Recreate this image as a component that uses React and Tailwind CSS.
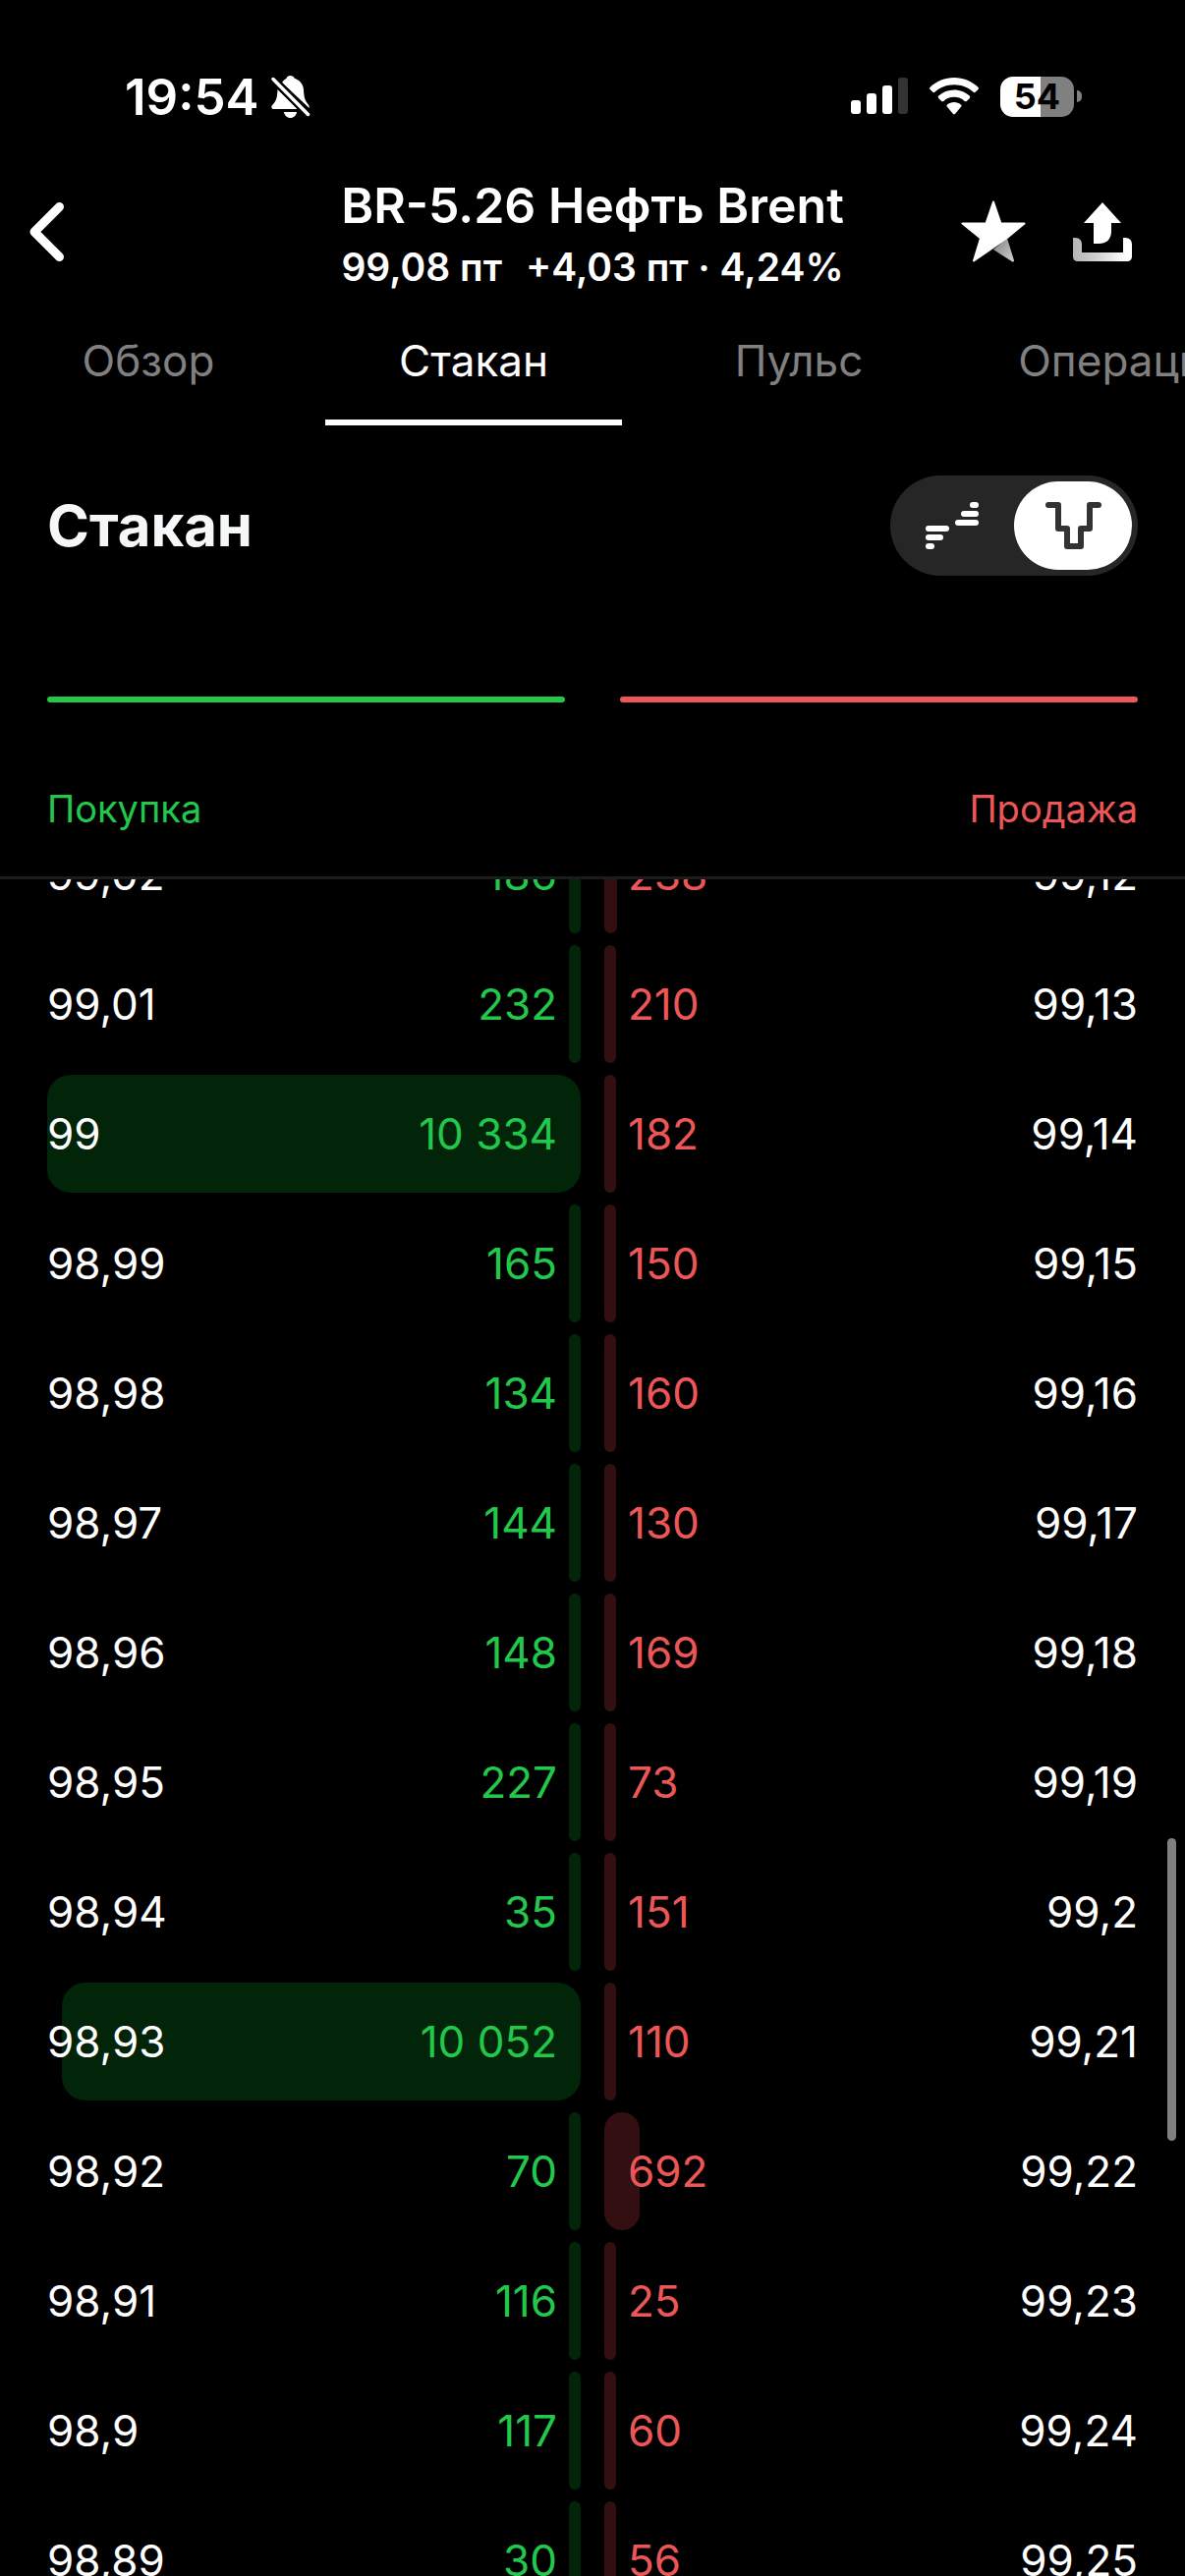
import { useLayoutEffect, useRef, useState } from "react";

const TABS = ["Обзор", "Стакан", "Пульс", "Операции"];

const MAX_VOLUME = 10334;

const ROWS = [
  { bid: "99,02", bidQty: 186, ask: "99,12", askQty: 238 },
  { bid: "99,01", bidQty: 232, ask: "99,13", askQty: 210 },
  { bid: "99", bidQty: 10334, ask: "99,14", askQty: 182 },
  { bid: "98,99", bidQty: 165, ask: "99,15", askQty: 150 },
  { bid: "98,98", bidQty: 134, ask: "99,16", askQty: 160 },
  { bid: "98,97", bidQty: 144, ask: "99,17", askQty: 130 },
  { bid: "98,96", bidQty: 148, ask: "99,18", askQty: 169 },
  { bid: "98,95", bidQty: 227, ask: "99,19", askQty: 73 },
  { bid: "98,94", bidQty: 35, ask: "99,2", askQty: 151 },
  { bid: "98,93", bidQty: 10052, ask: "99,21", askQty: 110 },
  { bid: "98,92", bidQty: 70, ask: "99,22", askQty: 692 },
  { bid: "98,91", bidQty: 116, ask: "99,23", askQty: 25 },
  { bid: "98,9", bidQty: 117, ask: "99,24", askQty: 60 },
  { bid: "98,89", bidQty: 30, ask: "99,25", askQty: 56 },
];

const formatQty = (qty) =>
  String(qty).replace(/\B(?=(\d{3})+$)/g, "\u00a0");

const barWidth = (qty) => `${(qty / MAX_VOLUME) * 100}%`;

const BellOffIcon = () => (
  <svg width="40" height="43" viewBox="0 0 40 43" fill="white" aria-hidden="true">
    <path d="M11 7C13 4 15 3.200 15.500 2.800C16 1 17.500 0 19.500 0C21.500 0 23 1 23.700 2.800C29 4.500 32.500 8.500 33 14C33.300 21 34 25 37.500 29C38.500 30.300 39 31.500 38.600 33L11 7Z" />
    <path d="M6.500 14L27 34H3C0 34 -.5 31.500 1.500 29.500C5 26 6.300 22 6.500 14Z" />
    <path d="M13 37H26C25.500 40.500 23 43 19.500 43C16 43 13.500 40.500 13 37Z" />
    <path d="M2 3.500L37.500 39.500" stroke="black" strokeWidth="8" strokeLinecap="round" />
    <path d="M2 3.500L37.500 39.500" stroke="white" strokeWidth="3.500" strokeLinecap="round" />
  </svg>
);

const SignalIcon = () => (
  <svg width="58" height="38" viewBox="0 0 58 38" fill="white" aria-hidden="true">
    <rect x="0" y="23" width="10" height="14" rx="3" />
    <rect x="16" y="16" width="10" height="21" rx="3" />
    <rect x="32" y="8" width="10" height="29" rx="3" />
    <rect x="48" y="0" width="10" height="37" rx="3" fill="#333333" />
  </svg>
);

const WifiIcon = () => (
  <svg width="50" height="38" viewBox="0 0 50 38" fill="white" aria-hidden="true">
    <path d="M25 0C34.500 0 43 3.700 49.400 9.700C50.100 10.400 50.100 11.300 49.500 12L46.700 14.800C46.100 15.400 45.300 15.400 44.600 14.800C39.400 10 32.500 7.300 25 7.300C17.500 7.300 10.600 10 5.400 14.800C4.700 15.400 3.900 15.400 3.300 14.800L.5 12C-.1 11.300 -.1 10.400 .6 9.700C7 3.700 15.500 0 25 0Z" />
    <path d="M25 12.500C31 12.500 36.500 14.800 40.700 18.600C41.400 19.300 41.400 20.200 40.800 20.900L37.800 23.900C37.200 24.500 36.400 24.500 35.700 23.900C32.800 21.300 29.100 19.800 25 19.800C20.900 19.800 17.200 21.300 14.300 23.900C13.600 24.500 12.800 24.500 12.200 23.900L9.200 20.900C8.600 20.200 8.600 19.300 9.300 18.600C13.500 14.800 19 12.500 25 12.500Z" />
    <path d="M25 25C27.700 25 30.100 26 32 27.600C32.700 28.200 32.700 29.100 32 29.800L26.200 36.700C25.500 37.400 24.500 37.400 23.800 36.700L18 29.800C17.300 29.100 17.300 28.200 18 27.600C19.900 26 22.300 25 25 25Z" />
  </svg>
);

const Battery = () => (
  <div className="flex items-center gap-[3px]">
    <div className="flex h-[41px] w-[75px] items-center justify-center rounded-[13px] bg-linear-to-r from-white from-55% to-[#808080] to-55% text-[36px] font-bold leading-none text-black">
      54
    </div>
    <div className="h-3 w-[5px] rounded-r-full bg-[#808080]" />
  </div>
);

const StatusBar = () => (
  <div className="flex h-[168px] items-center justify-between pt-7 pr-[105px] pl-[127px]">
    <div className="flex items-center gap-3">
      <span className="text-[51px] font-semibold leading-none">19:54</span>
      <BellOffIcon />
    </div>
    <div className="flex items-center gap-[22px]">
      <SignalIcon />
      <WifiIcon />
      <Battery />
    </div>
  </div>
);

const StarIcon = () => (
  <svg width="66" height="63" viewBox="0 0 66 63" aria-hidden="true">
    <defs>
      <linearGradient id="starLeg" x1="0" y1="0" x2="1" y2="1">
        <stop offset="0" stopColor="#808080" />
        <stop offset="1" stopColor="#d0d0d0" />
      </linearGradient>
    </defs>
    <path d="M33 50L47 38.500L54 61C54.300 62.300 53 63 52 62.300Z" fill="url(#starLeg)" />
    <path
      d="M33 1.500L40.500 23.500H64.500L47 38L13 61.500L20 38.500L1.500 23.500H25.500Z"
      fill="white"
      stroke="white"
      strokeWidth="2"
      strokeLinejoin="round"
    />
  </svg>
);

const ShareIcon = () => (
  <svg width="60" height="60" viewBox="0 0 60 60" aria-hidden="true">
    <defs>
      <linearGradient id="tray" x1="0" y1="0" x2="1" y2="0">
        <stop offset="0" stopColor="#b4b4b4" />
        <stop offset="0.400" stopColor="#d0d0d0" />
        <stop offset="0.900" stopColor="#ffffff" />
      </linearGradient>
    </defs>
    <path d="M30 0L49 21H39V29C39 38 34 42 26 42H21V21H11Z" fill="white" />
    <path
      d="M0 36H2C7 36 9 39 9 43V51H51V36H53C58 36 60 39 60 43V55C60 58 58 60 55 60H5C2 60 0 58 0 55Z"
      fill="url(#tray)"
    />
  </svg>
);

const Header = () => (
  <header className="grid h-[135px] grid-cols-[1fr_auto_1fr] items-center px-[30px]">
    <button aria-label="Назад" className="justify-self-start">
      <svg width="35" height="60" viewBox="0 0 35 60" fill="none" aria-hidden="true">
        <path
          d="M30.500 4.500L5 30L30.500 55.500"
          stroke="white"
          strokeWidth="9"
          strokeLinecap="round"
          strokeLinejoin="round"
        />
      </svg>
    </button>
    <div className="pt-2 text-center">
      <h1 className="text-[50px] font-semibold leading-[64px]">
        BR-5.26 Нефть Brent
      </h1>
      <p className="flex justify-center gap-6 text-[39px] font-semibold leading-[62px]">
        <span>99,08 пт</span>
        <span>+4,03 пт · 4,24%</span>
      </p>
    </div>
    <div className="flex items-center gap-12 justify-self-end pr-6">
      <button aria-label="В избранное">
        <StarIcon />
      </button>
      <button aria-label="Поделиться">
        <ShareIcon />
      </button>
    </div>
  </header>
);

const Tabs = () => {
  const [active, setActive] = useState("Стакан");

  return (
    <nav className="flex gap-[29px] overflow-hidden">
      {TABS.map((tab) => (
        <button
          key={tab}
          onClick={() => setActive(tab)}
          className={`w-[302px] shrink-0 border-b-6 pt-8 pb-7 text-[44px] leading-[64px] ${
            active === tab
              ? "border-white text-white"
              : "border-transparent text-[#808080]"
          }`}
        >
          {tab}
        </button>
      ))}
    </nav>
  );
};

const ListViewIcon = () => (
  <svg width="54" height="48" viewBox="0 0 54 48" fill="white" aria-hidden="true">
    <rect x="45" y="0" width="9" height="6" rx="3" />
    <rect x="36" y="9" width="18" height="6" rx="3" />
    <rect x="30" y="18" width="24" height="6" rx="3" />
    <rect x="0" y="24" width="24" height="6" rx="3" />
    <rect x="0" y="33" width="18" height="6" rx="3" />
    <rect x="0" y="42" width="9" height="6" rx="3" />
  </svg>
);

const DepthViewIcon = () => (
  <svg width="57" height="48" viewBox="0 0 57 48" fill="none" aria-hidden="true">
    <path
      d="M3 3H13V27H22V45H36V27H45V3H54"
      stroke="#333333"
      strokeWidth="6"
      strokeLinecap="round"
      strokeLinejoin="round"
    />
  </svg>
);

const ViewSwitch = () => {
  const [view, setView] = useState("depth");
  const views = [
    { id: "list", label: "Списком", icon: <ListViewIcon /> },
    { id: "depth", label: "Стаканом", icon: <DepthViewIcon /> },
  ];

  return (
    <div className="flex gap-1.5 rounded-full bg-[#262626] p-1.5">
      {views.map(({ id, label, icon }) => (
        <button
          key={id}
          aria-label={label}
          aria-pressed={view === id}
          onClick={() => setView(id)}
          className={`flex h-[90px] items-center justify-center rounded-full ${
            view === id ? "w-[120px] bg-white" : "w-[114px]"
          }`}
        >
          {icon}
        </button>
      ))}
    </div>
  );
};

const OrderBook = () => {
  const bodyRef = useRef(null);

  useLayoutEffect(() => {
    bodyRef.current.scrollTop = 65;
  }, []);

  return (
    <div className="relative flex min-h-0 flex-1 flex-col">
      <table className="flex min-h-0 flex-1 flex-col text-[44px] leading-[60px]">
        <thead className="block border-b-3 border-[#1c1c1c] px-12 pt-[84px] pb-[45px]">
          <tr className="flex justify-between text-[38px] leading-[48px]">
            <th className="font-normal text-[#22c74c]">Покупка</th>
            <th className="font-normal text-[#eb5757]">Продажа</th>
          </tr>
        </thead>
        <tbody
          ref={bodyRef}
          className="block min-h-0 flex-1 overflow-y-auto [scrollbar-width:none]"
        >
          {ROWS.map((row) => (
            <tr key={row.bid} className="grid grid-cols-2 gap-6 px-12 pb-3">
              <td className="grid h-[120px] items-center">
                <div
                  className="col-start-1 row-start-1 h-full min-w-3 justify-self-end rounded-3xl bg-[#022409]"
                  style={{ width: barWidth(row.bidQty) }}
                />
                <div className="col-start-1 row-start-1 flex justify-between pr-6">
                  <span>{row.bid}</span>
                  <span className="text-[#22c74c]">{formatQty(row.bidQty)}</span>
                </div>
              </td>
              <td className="grid h-[120px] items-center">
                <div
                  className="col-start-1 row-start-1 h-full min-w-3 rounded-3xl bg-[#330f11]"
                  style={{ width: barWidth(row.askQty) }}
                />
                <div className="col-start-1 row-start-1 flex justify-between pl-6">
                  <span className="text-[#eb5757]">{formatQty(row.askQty)}</span>
                  <span>{row.ask}</span>
                </div>
              </td>
            </tr>
          ))}
        </tbody>
      </table>
      {/* scroll thumb */}
      <div className="absolute right-[9px] bottom-[443px] h-[308px] w-[9px] rounded-full bg-[#808080]" />
    </div>
  );
};

const App = () => {
  return (
    <div className="flex h-screen flex-col overflow-hidden bg-black font-['Inter','Noto_Sans',sans-serif] text-white">
      <StatusBar />
      <Header />
      <Tabs />
      <main className="flex min-h-0 flex-1 flex-col pt-[51px]">
        <div className="flex items-center justify-between px-12">
          <h2 className="text-[58px] font-bold leading-[72px] text-[#f6f7f8]">
            Стакан
          </h2>
          <ViewSwitch />
        </div>
        <div className="mt-[123px] grid grid-cols-2 gap-14 px-12">
          <div className="h-1.5 rounded-full bg-[#22c74c]" />
          <div className="h-1.5 rounded-full bg-[#eb5757]" />
        </div>
        <OrderBook />
      </main>
    </div>
  );
};

export default App;
